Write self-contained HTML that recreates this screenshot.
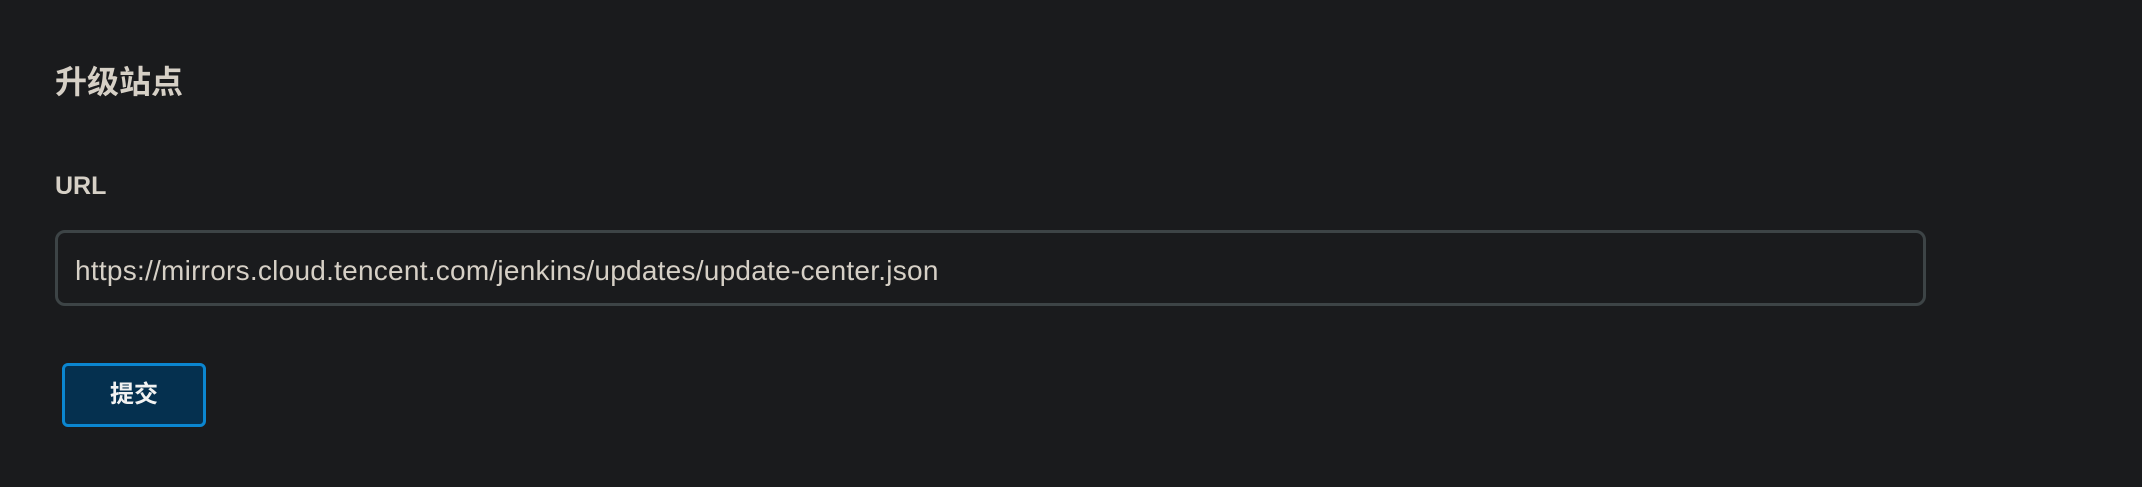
<!DOCTYPE html>
<html><head><meta charset="utf-8"><style>
html,body{margin:0;padding:0;background:#1a1b1d;width:2142px;height:487px;overflow:hidden;font-family:"Liberation Sans","Noto Sans CJK SC",sans-serif;color:#d6d0c6}
.t{position:absolute;left:55px;top:60px;font-size:32px;font-weight:bold;line-height:44px}
.l{position:absolute;left:55px;top:168px;font-size:25px;font-weight:bold;line-height:36px}
.i{position:absolute;left:55px;top:230px;width:1865px;height:70px;border:3px solid #3d4446;border-radius:10px;box-sizing:content-box}
.i span{position:absolute;left:17px;top:3px;line-height:70px;font-size:28px;letter-spacing:0.25px;color:#d6d0c6}
.b{position:absolute;left:62px;top:363px;width:138px;height:58px;border:3px solid #0b86d0;border-radius:6px;background:#05304f;color:#f2f2f2;font-size:24px;font-weight:bold;text-align:center;line-height:58px}
</style></head><body>
<div class="t">升级站点</div>
<div class="l">URL</div>
<div class="i"><span>https://mirrors.cloud.tencent.com/jenkins/updates/update-center.json</span></div>
<div class="b">提交</div>
</body></html>
